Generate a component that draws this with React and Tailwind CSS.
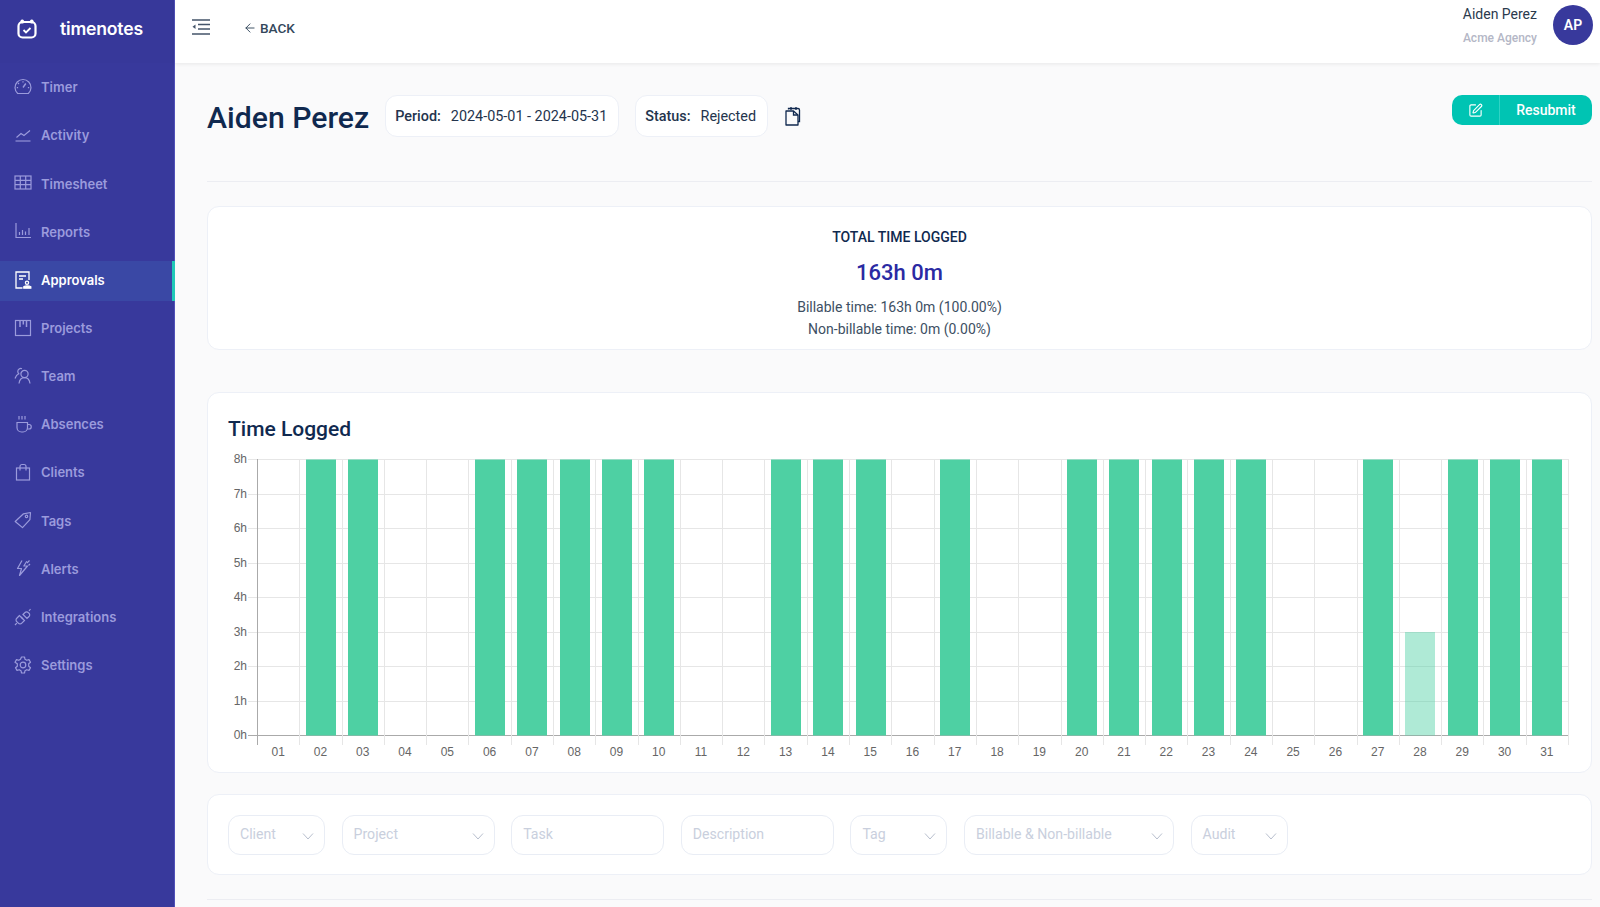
import { ArrowLeft, SquarePen } from "lucide-react";

function GaugeIcon(props) {
  return (
    <svg viewBox="0 0 18 18" fill="none" stroke="currentColor" strokeWidth="1.2" {...props}>
      <path d="M3.700 15.500A8 8 0 1 1 14.300 15.500z" strokeLinejoin="round" />
      <path d="M9 9.500 11.800 5.500" strokeWidth="1.400" />
      <path d="M9 3.200v1.300M4 5l1 1M2.800 9.700h1.300M15.200 9.700h-1.300" />
    </svg>
  );
}

function ActivityIcon(props) {
  return (
    <svg viewBox="0 0 18 18" fill="none" stroke="currentColor" strokeWidth="1.1" {...props}>
      <path d="M1.500 15h15" />
      <path d="M2.500 11.500 7 7.500l3 2 6-5" />
    </svg>
  );
}

function TableIcon(props) {
  return (
    <svg viewBox="0 0 18 18" fill="none" stroke="currentColor" strokeWidth="1.200" {...props}>
      <rect x="1" y="2" width="16" height="13" />
      <path d="M1 6.300h16M1 10.700h16M6.300 2v13M11.700 2v13" />
    </svg>
  );
}

function ReportsIcon(props) {
  return (
    <svg viewBox="0 0 18 18" fill="none" stroke="currentColor" strokeWidth="1.200" {...props}>
      <path d="M2 1v14.500h15" />
      <path d="M5.500 13V10M8.500 13V8M11.500 13V9.500M15 13V6" />
    </svg>
  );
}

function ApprovalsIcon(props) {
  return (
    <svg viewBox="0 0 18 18" fill="none" stroke="currentColor" strokeWidth="1.300" {...props}>
      <path d="M8.500 17H2V1h13v8" />
      <path d="M5 5h7M5 8h4" />
      <circle cx="13" cy="11.800" r="1.600" />
      <path d="M9.800 17.200h7v-1.500c-1.500-1-5.500-1-7 0z" fill="currentColor" />
    </svg>
  );
}

function ProjectsIcon(props) {
  return (
    <svg viewBox="0 0 18 18" fill="none" stroke="currentColor" strokeWidth="1.200" {...props}>
      <rect x="1.500" y="1.500" width="15" height="15" />
      <path d="M6 1.500V8M9.300 1.500V5.500M12.500 1.500V8" strokeWidth="1.500" />
    </svg>
  );
}

function TeamIcon(props) {
  return (
    <svg viewBox="0 0 18 18" fill="none" stroke="currentColor" strokeWidth="1.200" {...props}>
      <circle cx="10.500" cy="7" r="3.600" />
      <path d="M5 16.500c.5-3.500 2.700-5.800 5.500-5.800s5 2.300 5.500 5.800" />
      <path d="M8 1.700A3 3 0 0 0 3.800 4.500c0 1 .4 1.700 1 2.300C3 7.500 1.700 9.500 1 11.500" />
    </svg>
  );
}

function CoffeeIcon(props) {
  return (
    <svg viewBox="0 0 18 18" fill="none" stroke="currentColor" strokeWidth="1.200" {...props}>
      <path d="M3 7.500h10.500v5A4.500 4.500 0 0 1 9 17H7.500A4.500 4.500 0 0 1 3 12.500z" />
      <path d="M13.500 9.500H15a2 2 0 0 1 0 4.500h-1.800" />
      <path d="M5 1v3.500M8 1v3.500M11 1v3.500" />
    </svg>
  );
}

function BagIcon(props) {
  return (
    <svg viewBox="0 0 18 18" fill="none" stroke="currentColor" strokeWidth="1.200" {...props}>
      <rect x="2.500" y="5" width="13" height="12" />
      <path d="M6 7.500V3.500a2 2 0 0 1 2-2h2a2 2 0 0 1 2 2v4" />
    </svg>
  );
}

function TagIcon(props) {
  return (
    <svg viewBox="0 0 18 18" fill="none" stroke="currentColor" strokeWidth="1.200" {...props}>
      <path d="M1.200 10.500 9.500 2.800l7-1.300-.6 7.200-7.400 7.900z" strokeLinejoin="round" />
      <circle cx="12.500" cy="5.400" r="1.200" />
    </svg>
  );
}

function AlertIcon(props) {
  return (
    <svg viewBox="0 0 18 18" fill="none" stroke="currentColor" strokeWidth="1.200" {...props}>
      <path d="M8 1.500 3.500 9.500h4L5.500 16.500l8-9.500H9.800l3-4.800" strokeLinejoin="round" />
      <path d="M15.500 1.500 13 4M16 5l-1.500 1.500" />
    </svg>
  );
}

function PlugIcon(props) {
  return (
    <svg viewBox="0 0 18 18" fill="none" stroke="currentColor" strokeWidth="1.200" {...props}>
      <path d="M5.500 7.500 2.800 10.200a2.400 2.400 0 0 0 0 3.500l1.500 1.500a2.400 2.400 0 0 0 3.500 0l2.700-2.700z" />
      <path d="M9 6.500 11 4.500a2.200 2.200 0 0 1 3.200 0l.8.800a2.200 2.200 0 0 1 0 3.200l-2 2z" />
      <path d="M1 17l1.800-1.800M15 3l1.500-2M7 9l2 2" />
    </svg>
  );
}

function GearIcon(props) {
  return (
    <svg viewBox="0 0 18 18" fill="none" stroke="currentColor" strokeWidth="1.200" {...props}>
      <circle cx="9" cy="9" r="2.800" />
      <path
        d="M7.500 1h3l.5 2.300 1.700 1 2.300-.7 1.500 2.600-1.800 1.600v2.400l1.800 1.600-1.500 2.600-2.300-.7-1.700 1-.5 2.300h-3l-.5-2.300-1.700-1-2.300.7-1.500-2.600 1.800-1.600V7.800L1 6.200l1.500-2.600 2.300.7 1.700-1z"
        strokeLinejoin="round"
      />
    </svg>
  );
}

function LogoIcon(props) {
  return (
    <svg viewBox="0 0 20 20" fill="none" {...props}>
      <rect x="1.500" y="3" width="17" height="15.500" rx="4" stroke="currentColor" strokeWidth="2.200" />
      <rect x="3.500" y="0.500" width="3.500" height="4" rx="1.500" fill="currentColor" />
      <rect x="13" y="0.500" width="3.500" height="4" rx="1.500" fill="currentColor" />
      <path d="m6.500 11 2.500 2.500 4.500-4.500" stroke="currentColor" strokeWidth="1.800" />
    </svg>
  );
}

function MenuIcon(props) {
  return (
    <svg viewBox="0 0 18 16" fill="none" stroke="currentColor" strokeWidth="1.300" {...props}>
      <path d="M0 1h18M6 5.500h12M6 10h12M0 15h18" />
      <path d="M3.500 5.500v4.500L0.500 7.750z" fill="currentColor" stroke="none" />
    </svg>
  );
}

function CopyIcon(props) {
  return (
    <svg viewBox="0 0 16 20" fill="none" stroke="currentColor" strokeWidth="1.300" {...props}>
      <path d="M3.500 3.500V2.500h9.500a1.500 1.500 0 0 1 1.500 1.500v11.500h-1.500" />
      <path d="M1 5h7.500L13 9v10H1z" strokeLinejoin="round" />
      <path d="M8.500 5v4H13" />
      <path d="M6 1v3M11 1v3" />
    </svg>
  );
}

function Chevron(props) {
  return (
    <svg viewBox="0 0 12 8" fill="none" stroke="currentColor" strokeWidth="1" {...props}>
      <path d="M1 1.500 6 7l5-5.500" />
    </svg>
  );
}

const navItems = [
  { label: "Timer", Icon: GaugeIcon },
  { label: "Activity", Icon: ActivityIcon },
  { label: "Timesheet", Icon: TableIcon },
  { label: "Reports", Icon: ReportsIcon },
  { label: "Approvals", Icon: ApprovalsIcon, active: true },
  { label: "Projects", Icon: ProjectsIcon },
  { label: "Team", Icon: TeamIcon },
  { label: "Absences", Icon: CoffeeIcon },
  { label: "Clients", Icon: BagIcon },
  { label: "Tags", Icon: TagIcon },
  { label: "Alerts", Icon: AlertIcon },
  { label: "Integrations", Icon: PlugIcon },
  { label: "Settings", Icon: GearIcon },
];

const filters = [
  { label: "Client", width: "w-[97px]", select: true },
  { label: "Project", width: "w-[153px]", select: true },
  { label: "Task", width: "w-[153px]" },
  { label: "Description", width: "w-[153px]" },
  { label: "Tag", width: "w-[97px]", select: true },
  { label: "Billable & Non-billable", width: "w-[210px]", select: true },
  { label: "Audit", width: "w-[97px]", select: true },
];

const hours = [0, 8, 8, 0, 0, 8, 8, 8, 8, 8, 0, 0, 8, 8, 8, 0, 8, 0, 0, 8, 8, 8, 8, 8, 0, 0, 8, 3, 8, 8, 8];

function Sidebar() {
  return (
    <aside className="w-[175px] shrink-0 bg-[#38399c] border-r border-[#5050b8] font-['Inter',sans-serif]">
      <div className="h-[63px] bg-[#37389a] flex items-center pb-[5px] pl-[17px] gap-[23px] text-white">
        <LogoIcon className="w-5 h-5" />
        <span className="text-[17.600px] font-semibold tracking-[-0.2px]">timenotes</span>
      </div>
      <nav className="pt-[5px] flex flex-col gap-[8.150px]">
        {navItems.map(({ label, Icon, active }) => (
          <div
            key={label}
            className={
              active
                ? "h-10 flex items-center gap-[9px] pl-[14px] bg-[#3a48a5] border-r-[3px] border-[#20c9b8] -mr-px text-white font-semibold"
                : "h-10 flex items-center gap-[9px] pl-[14px] text-[#9b9bdc] font-semibold"
            }
          >
            <Icon className="w-[18px] h-[18px] -mt-0.5 shrink-0" />
            <span className="text-[13px]">{label}</span>
          </div>
        ))}
      </nav>
    </aside>
  );
}

function Header() {
  return (
    <header className="h-[63px] shrink-0 bg-white shadow-[0_1px_4px_rgba(0,0,0,0.08)] flex items-start pl-[17px] pr-[7px]">
      <MenuIcon className="w-[18px] h-4 mt-[19px] text-[#44546a]" />
      <div className="ml-[33px] mt-[18px] flex items-center gap-[3px] text-[#33475b] text-[13.600px] font-medium leading-5">
        <ArrowLeft className="w-[14px] h-[14px]" strokeWidth={1.6} />
        <span>BACK</span>
      </div>
      <div className="ml-auto mt-[5px] flex items-start gap-4">
        <div className="text-right">
          <div className="text-[14px] text-[#2b3a4d] leading-5 -mt-[1px]">Aiden Perez</div>
          <div className="text-[12px] text-[#b4b7c6] leading-4 mt-[6px] font-medium">Acme Agency</div>
        </div>
        <div className="w-10 h-10 rounded-full bg-[#38399c] text-white flex items-center justify-center text-[14px] font-semibold">AP</div>
      </div>
    </header>
  );
}

function Pill({ label, value }) {
  return (
    <div className="h-[42px] rounded-xl border border-[#edf0f7] bg-white flex items-center pl-[9px] pr-[11px] pt-px gap-[10px] text-[14.400px] text-[#24344d]">
      <span className="font-medium">{label}</span>
      <span>{value}</span>
    </div>
  );
}

function Chart() {
  const axisX = 29;
  const top = 9;
  const bottom = 285;
  const right = 1340;
  const step = (right - axisX) / 31;
  const rowH = (bottom - top) / 8;
  return (
    <svg width="1345" height="310" className="block">
      {Array.from({ length: 9 }).map((_, i) => {
        const y = Math.round(top + i * rowH) + 0.5;
        return (
          <g key={i}>
            <line x1={20} x2={right} y1={y} y2={y} stroke={i === 8 ? "#aaaaaa" : "#e6e6e6"} />
            <text x={19} y={y + 3} textAnchor="end" fontSize="12" fill="#666666" fontFamily="Liberation Sans, sans-serif">{8 - i}h</text>
          </g>
        );
      })}
      {Array.from({ length: 32 }).map((_, i) => {
        const x = Math.round(axisX + i * step) + 0.5;
        return <line key={i} x1={x} x2={x} y1={top} y2={bottom + 10} stroke={i === 0 ? "#aaaaaa" : "#e6e6e6"} />;
      })}
      {hours.map((h, i) => {
        const cx = axisX + (i + 0.5) * step;
        const barH = h * rowH;
        return (
          <g key={i}>
            {h > 0 && (
              <rect
                x={Math.round(cx - 14.5)}
                y={bottom - barH + 0.5}
                width="30"
                height={barH}
                fill="#4ed0a3"
                fillOpacity={h === 3 ? 0.45 : 1}
              />
            )}
            <text x={cx} y={bottom + 21} textAnchor="middle" fontSize="12" fill="#666666" fontFamily="Liberation Sans, sans-serif">
              {String(i + 1).padStart(2, "0")}
            </text>
          </g>
        );
      })}
    </svg>
  );
}

function Filters() {
  return (
    <div className="mt-[21px] h-[81px] rounded-xl border border-[#edf0f7] bg-white flex items-center pl-5 gap-[16.600px] shrink-0">
      {filters.map((f) => (
        <div
          key={f.label}
          className={`${f.width} h-10 rounded-xl border border-[#e9edf5] flex items-center justify-between pl-[11px] pr-[10px] text-[14.100px] text-[#c9cfdd]`}
        >
          <span>{f.label}</span>
          {f.select && <Chevron className="w-[12px] h-2 mt-0.5 text-[#b8bfce]" />}
        </div>
      ))}
    </div>
  );
}

export default function App() {
  return (
    <div className="flex h-[907px] overflow-hidden bg-[#fafafb] font-['Roboto',sans-serif]">
      <Sidebar />
      <main className="flex-1 flex flex-col min-w-0">
        <Header />
        <div className="pt-8 pl-8 pr-2 flex flex-col">
          <div className="h-[87px] border-b border-[#ecedf2] flex items-start shrink-0">
            <h1 className="text-[30.200px] leading-[42px] mt-[2px] font-medium text-[#10294f] mr-4">Aiden Perez</h1>
            <Pill label="Period:" value="2024-05-01 - 2024-05-31" />
            <div className="w-4" />
            <Pill label="Status:" value="Rejected" />
            <CopyIcon className="w-4 h-5 ml-[17px] mt-[11px] text-[#10294f]" />
            <div className="ml-auto h-[30px] w-[140px] rounded-[10px] bg-[#00c4b3] text-white flex items-center text-[14px] font-medium">
              <div className="w-[48px] h-full border-r border-[#2fd3c5] flex items-center justify-center">
                <SquarePen className="w-[15px] h-[15px]" strokeWidth={1.8} />
              </div>
              <span className="flex-1 text-center">Resubmit</span>
            </div>
          </div>

          <section className="mt-[24px] h-[144px] rounded-xl border border-[#edf0f7] bg-white flex flex-col items-center pt-5 shrink-0">
            <div className="text-[14px] leading-5 font-medium text-[#10294f]">TOTAL TIME LOGGED</div>
            <div className="text-[22px] leading-7 mt-[12px] font-medium text-[#2a2aa3]">163h 0m</div>
            <div className="text-[14px] leading-[21.500px] mt-[10px] text-[#3d4f63] text-center">
              <div>Billable time: 163h 0m (100.00%)</div>
              <div>Non-billable time: 0m (0.00%)</div>
            </div>
          </section>

          <section className="mt-[42px] h-[381px] rounded-xl border border-[#edf0f7] bg-white pl-5 shrink-0">
            <div className="h-[57px] flex items-end text-[21px] leading-7 font-medium text-[#10294f] pb-[7px]">Time Logged</div>
            <Chart />
          </section>

          <Filters />

          <div className="mt-[24px] border-t border-[#ecedf2]" />
        </div>
      </main>
    </div>
  );
}
